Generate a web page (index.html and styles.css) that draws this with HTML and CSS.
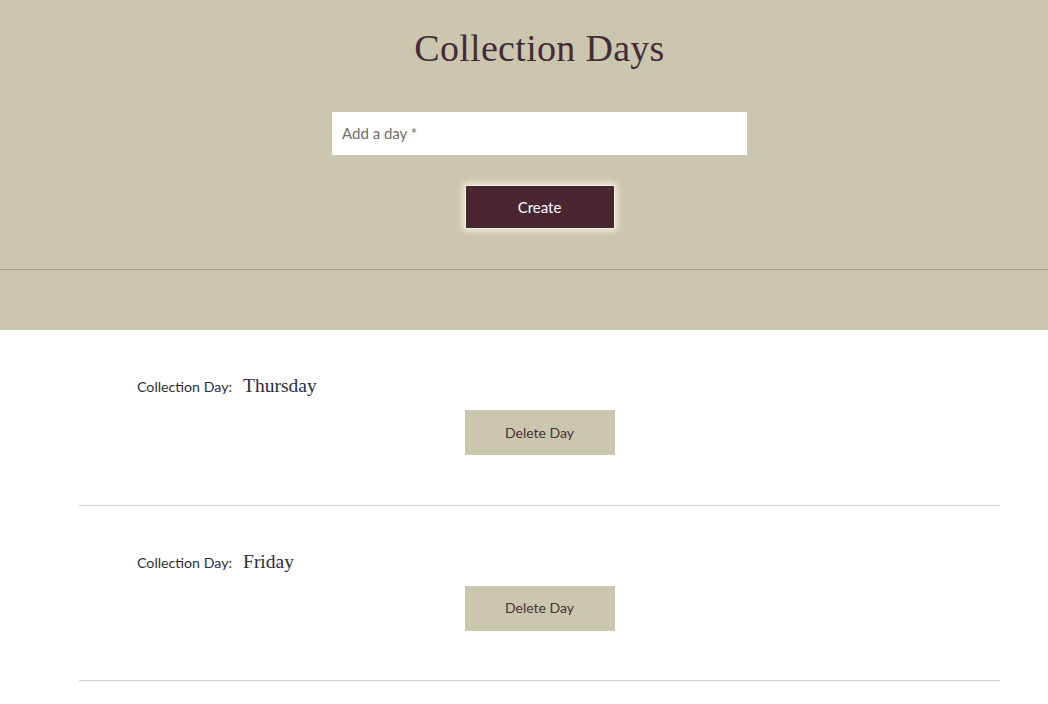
FILE: index.html
```html
<!DOCTYPE html>
<html>
<head>
<meta charset="utf-8">
<link rel="stylesheet" href="styles.css">
</head>
<body>
<header class="hero">
  <div class="hero-inner">
    <h1 class="title">Collection Days</h1>
    <div class="field">Add a day *</div>
    <button class="create">Create</button>
  </div>
  <div class="hero-rule"></div>
</header>
<main class="list">
  <section class="row">
    <div class="info">
      <span class="label">Collection Day:</span>
      <span class="value">Thursday</span>
    </div>
    <button class="delete">Delete Day</button>
  </section>
  <section class="row">
    <div class="info">
      <span class="label">Collection Day:</span>
      <span class="value">Friday</span>
    </div>
    <button class="delete">Delete Day</button>
  </section>
</main>
</body>
</html>
```
FILE: styles.css
```css
* { box-sizing: border-box; }
body {
  margin: 0;
  background: #ffffff;
  font-family: Lato, "Open Sans", sans-serif;
}
.hero {
  background: #cbc6ae;
  height: 330px;
}
.hero-inner {
  width: 921px;
  margin-left: 79px;
  display: flex;
  flex-direction: column;
  align-items: center;
  padding-top: 26px;
}
.title {
  margin: 0;
  font-family: "Liberation Serif", serif;
  font-weight: normal;
  font-size: 38px;
  line-height: 44px;
  color: #452a39;
  letter-spacing: 0.3px;
}
.field {
  margin-top: 42px;
  width: 415px;
  height: 43px;
  background: #ffffff;
  padding-left: 10px;
  font-size: 15px;
  line-height: 43px;
  color: #6e6e6e;
}
.create {
  margin-top: 30px;
  width: 150px;
  height: 44px;
  background: #4a2633;
  border: 1px solid #f4f1e4;
  box-shadow: 0 0 6px 2px rgba(255, 255, 240, 0.7);
  color: #ffffff;
  font-family: Lato, sans-serif;
  font-size: 15px;
  padding-bottom: 2px;
}
.hero-rule {
  margin-top: 40px;
  height: 1px;
  background: #a59f8c;
}
.list {
  width: 921px;
  margin-left: 79px;
}
.row {
  display: flex;
  flex-direction: column;
  align-items: center;
  padding-top: 45px;
  height: 175.5px;
  border-bottom: 1px solid #d3d0d0;
}
.info {
  align-self: flex-start;
  padding-left: 58px;
  display: flex;
  align-items: baseline;
  gap: 11px;
  height: 22px;
}
.label {
  font-size: 14.2px;
  color: #2c2d3c;
}
.value {
  font-family: "Liberation Serif", serif;
  font-size: 19.5px;
  color: #2c2d3c;
}
.delete {
  margin-top: 13px;
  width: 150px;
  height: 45px;
  background: #cbc6ae;
  border: none;
  color: #4a3038;
  font-family: Lato, sans-serif;
  font-size: 14px;
  padding-bottom: 2px;
}
```
